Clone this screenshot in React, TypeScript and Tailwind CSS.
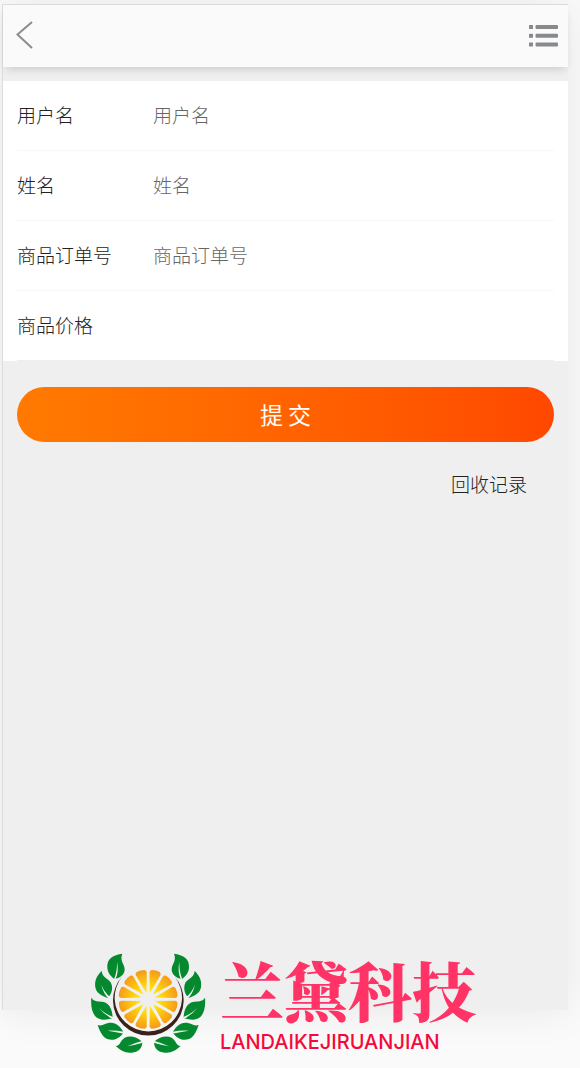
import React from "react";

type Field = { id: string; label: string; placeholder?: string };

const fields: Field[] = [
  { id: "username", label: "用户名", placeholder: "用户名" },
  { id: "fullname", label: "姓名", placeholder: "姓名" },
  { id: "order", label: "商品订单号", placeholder: "商品订单号" },
  { id: "price", label: "商品价格" },
];

const segmentAngles = [15, 45, 75, 105, 135, 165, 195, 225, 255, 285, 315, 345];

function Leaves() {
  return (
    <>
      <g fill="#04892f">
        <path d="M127 41C100 45 80 55 82 83C83 98 92 108 103 117C120 115 134 104 134 88C134 72 118 62 127 41Z" />
        <path d="M65 93C50 108 43 122 46 142C49 160 65 168 84 174C93 162 99 150 95 134C90 115 68 118 65 93Z" />
        <path d="M34 173C32 195 35 215 45 228C58 242 75 241 98 235C98 215 92 196 77 188C60 180 45 190 34 173Z" />
        <path d="M53 255C60 275 68 292 84 298C102 303 118 295 131 278C124 262 110 248 92 248C76 248 68 260 53 255Z" />
        <path d="M107 318C120 330 135 340 155 338C175 336 187 325 187 305C170 290 150 285 134 293C120 302 122 316 107 318Z" />
      </g>
      <g fill="#f4f4f4">
        <path d="M102 118Q112 95 111 66Q117 92 107 117Z" />
        <path d="M86 176Q70 160 64 134Q74 158 90 171Z" />
        <path d="M99 238Q74 225 56 203Q76 222 99 231Z" />
        <path d="M132 281Q110 276 83 272Q108 271 132 275Z" />
        <path d="M188 308Q166 314 142 319Q162 309 188 302Z" />
      </g>
    </>
  );
}

function CitrusLogo() {
  return (
    <svg className="h-32 w-[140px] shrink-0" viewBox="0 0 420 384" aria-hidden="true">
      <defs>
        <radialGradient id="pulp" gradientUnits="userSpaceOnUse" cx="0" cy="0" r="92">
          <stop offset="0.15" stopColor="#fff02a" />
          <stop offset="0.5" stopColor="#ffd00c" />
          <stop offset="1" stopColor="#f4961c" />
        </radialGradient>
      </defs>
      <path
        d="M127 109A106 106 0 1 0 283 109A101 101 0 1 1 127 109Z"
        fill="#3a211a"
      />
      <g transform="translate(204.500 178)" fill="url(#pulp)">
        {segmentAngles.map((angle) => (
          <path
            key={angle}
            transform={`rotate(${angle})`}
            d="M0 -20L-17 -79Q-18 -86 -12 -88Q0 -91 12 -88Q18 -86 17 -79Z"
          />
        ))}
      </g>
      <Leaves />
      <g transform="translate(409 0) scale(-1 1)">
        <Leaves />
      </g>
    </svg>
  );
}

export default function App() {
  return (
    <div className="relative flex min-h-screen flex-col overflow-hidden bg-[#fafafa] pt-1 pr-3 pb-[58px] pl-0.5 font-['Noto_Sans_CJK_SC',sans-serif] text-[19px] font-light text-[#222]">
      <main className="flex flex-1 flex-col border-t border-l border-[#dcdcdc] bg-[#efefef] shadow-[0_0_40px_rgba(0,0,0,0.08)]">
        <header className="flex h-[62px] items-center justify-between bg-[#fafafa] px-2.5 shadow-[0_5px_8px_-3px_rgba(0,0,0,0.16)]">
          <button type="button" aria-label="返回" className="flex">
            <svg className="h-8 w-6" viewBox="0 0 24 32" fill="none" stroke="#8c8c90" strokeWidth="2">
              <path d="M19 2L4.500 14.500L19 28" />
            </svg>
          </button>
          <button type="button" aria-label="菜单" className="flex">
            <svg className="h-6 w-[30px]" viewBox="0 0 30 24" fill="#88898d">
              <rect x="1" y="1" width="4" height="4" />
              <rect x="7.500" y="1" width="22.500" height="4" rx="1" />
              <rect x="1" y="9.800" width="4" height="4" />
              <rect x="7.500" y="9.800" width="22.500" height="4" rx="1" />
              <rect x="1" y="18.500" width="4" height="4" />
              <rect x="7.500" y="18.500" width="22.500" height="4" rx="1" />
            </svg>
          </button>
        </header>

        <form className="mt-3.5" onSubmit={(event) => event.preventDefault()}>
          <div className="bg-white px-3.5">
            {fields.map((field) => (
              <div
                key={field.id}
                className="flex h-[70px] items-center border-b border-[#f7f7f7] last:border-[#efefef]"
              >
                <label htmlFor={field.id} className="w-[136px] shrink-0">
                  {field.label}
                </label>
                <input
                  id={field.id}
                  type="text"
                  placeholder={field.placeholder}
                  className="min-w-0 flex-1 bg-transparent font-light outline-none placeholder:text-[#666]"
                />
              </div>
            ))}
          </div>
          <div className="px-3.5 pt-[26px]">
            <button
              type="submit"
              className="h-[55px] w-full rounded-full bg-linear-to-r from-[#ff7a00] to-[#ff4800] text-[23px] font-normal text-white"
            >
              提 交
            </button>
          </div>
        </form>

        <a href="#records" className="mt-7 mr-[41px] self-end">
          回收记录
        </a>
      </main>

      <div className="pointer-events-none absolute bottom-0 left-20 flex">
        <CitrusLogo />
        <div className="flex flex-col pt-3 whitespace-nowrap">
          <span className="font-['Noto_Serif_CJK_SC','Noto_Sans_CJK_SC',serif] text-[64px] leading-[72px] font-black text-[#ff3366]">
            兰黛科技
          </span>
          <span className="mt-1.5 font-['Inter',sans-serif] text-xl leading-6 font-medium text-[#f5093b]">
            LANDAIKEJIRUANJIAN
          </span>
        </div>
      </div>
    </div>
  );
}
